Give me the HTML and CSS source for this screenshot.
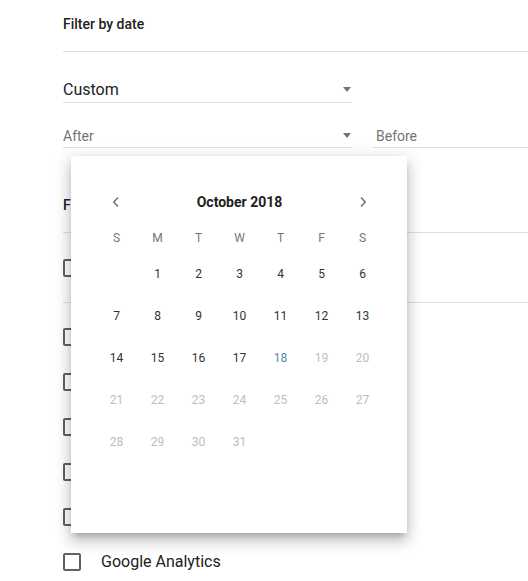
FILE: index.html
```html
<!DOCTYPE html>
<html lang="en">
<head>
    <meta charset="UTF-8">
    <meta name="viewport" content="width=device-width, initial-scale=1.0">
    <title>Filters</title>
    <link rel="stylesheet" href="styles.css">
</head>
<body>

<main class="filters">
    <section class="filter-section">
        <h2 class="filter-title">Filter by date</h2>

        <div class="select-field range-select">
            <span class="select-value">Custom</span>
            <span class="select-arrow"></span>
        </div>

        <div class="date-range">
            <div class="date-field">
                <div class="select-field">
                    <span class="select-placeholder">After</span>
                    <span class="select-arrow"></span>
                </div>

                <!-- date picker popup, opened from the "After" field -->
                <div class="calendar">
                    <div class="calendar-header">
                        <button class="calendar-nav" aria-label="Previous month">
                            <svg width="8" height="12" viewBox="0 0 8 12"><polyline points="6,1.5 1.8,6 6,10.5" fill="none" stroke="#757575" stroke-width="1.6"/></svg>
                        </button>
                        <span class="calendar-month">October 2018</span>
                        <button class="calendar-nav" aria-label="Next month">
                            <svg width="8" height="12" viewBox="0 0 8 12"><polyline points="2,1.5 6.2,6 2,10.5" fill="none" stroke="#757575" stroke-width="1.6"/></svg>
                        </button>
                    </div>
                    <div class="calendar-weekdays">
                        <span>S</span><span>M</span><span>T</span><span>W</span><span>T</span><span>F</span><span>S</span>
                    </div>
                    <div class="calendar-days" id="calendarDays"></div>
                </div>
            </div>

            <div class="select-field before-field">
                <span class="select-placeholder">Before</span>
            </div>
        </div>
    </section>

    <section class="filter-section">
        <h2 class="filter-title">Filter by source</h2>

        <label class="check-row check-all">
            <span class="checkbox"></span>
            <span class="check-label">All sources</span>
        </label>

        <ul class="source-list">
            <li><label class="check-row"><span class="checkbox"></span><span class="check-label">Email</span></label></li>
            <li><label class="check-row"><span class="checkbox"></span><span class="check-label">Chat</span></label></li>
            <li><label class="check-row"><span class="checkbox"></span><span class="check-label">Forms</span></label></li>
            <li><label class="check-row"><span class="checkbox"></span><span class="check-label">Phone</span></label></li>
            <li><label class="check-row"><span class="checkbox"></span><span class="check-label">Social</span></label></li>
            <li><label class="check-row"><span class="checkbox"></span><span class="check-label">Google Analytics</span></label></li>
        </ul>
    </section>
</main>

<script>
    // Build the October 2018 grid: starts on a Monday, today is the 18th
    const daysContainer = document.getElementById('calendarDays');
    const firstWeekday = 1;
    const daysInMonth = 31;
    const today = 18;

    for (let i = 0; i < firstWeekday; i++) {
        daysContainer.appendChild(document.createElement('span'));
    }
    for (let day = 1; day <= daysInMonth; day++) {
        const cell = document.createElement('span');
        cell.className = 'calendar-day';
        if (day === today) cell.classList.add('today');
        if (day > today) cell.classList.add('disabled');
        cell.innerText = day;
        daysContainer.appendChild(cell);
    }
</script>

</body>
</html>
```

FILE: styles.css
```css
body {
    margin: 0;
    background-color: #fff;
    font-family: Roboto, "Liberation Sans", Arial, sans-serif;
    color: #212121;
}
.filters {
    padding-left: 63px;
}
.filter-section + .filter-section {
    margin-top: 33px;
}
.filter-title {
    margin: 0;
    padding: 14px 0 17px;
    font-size: 14px;
    font-weight: 500;
    line-height: 20px;
    color: #212121;
    border-bottom: 1px solid #e0e0e0;
}

/* select-like fields with underline */
.select-field {
    display: flex;
    align-items: center;
    justify-content: space-between;
    padding: 5px 0 1px;
    border-bottom: 1px solid #e0e0e0;
    line-height: 20px;
}
.range-select {
    width: 289px;
    margin-top: 22px;
    padding: 6px 0 2px;
}
.select-value {
    font-size: 16px;
    color: #212121;
}
.select-placeholder {
    font-size: 14px;
    color: #757575;
}
.select-arrow {
    width: 0;
    height: 0;
    margin: 0 1px 1px 0;
    border-left: 4px solid transparent;
    border-right: 4px solid transparent;
    border-top: 5px solid #757575;
}
.date-range {
    display: flex;
    gap: 21px;
    margin-top: 18px;
}
.date-field {
    position: relative;
    width: 289px;
}
.before-field {
    flex: 1;
    padding-left: 3px;
}

/* date picker */
.calendar {
    position: absolute;
    left: 8px;
    top: calc(100% + 8px);
    z-index: 2;
    width: 336px;
    height: 377px;
    box-sizing: border-box;
    padding: 26px 24px 0 25px;
    background-color: #fff;
    box-shadow: 0 5px 6px -3px rgba(0, 0, 0, 0.2), 0 9px 12px 1px rgba(0, 0, 0, 0.14), 0 3px 16px 2px rgba(0, 0, 0, 0.12);
}
.calendar-header {
    display: flex;
    align-items: center;
    justify-content: space-between;
    height: 40px;
    padding: 0 16px;
}
.calendar-nav {
    display: flex;
    padding: 0;
    background: none;
    border: none;
    cursor: pointer;
}
.calendar-month {
    font-size: 14px;
    font-weight: 700;
    color: #212121;
}
.calendar-weekdays, .calendar-days {
    display: grid;
    grid-template-columns: repeat(7, 41px);
    text-align: center;
    font-size: 12px;
}
.calendar-weekdays {
    height: 31px;
    align-items: center;
    color: #757575;
}
.calendar-days {
    grid-auto-rows: 42px;
    align-items: center;
    color: #333;
}
.calendar-day.today {
    color: #4b8ea5;
}
.calendar-day.disabled {
    color: #bdbdbd;
}

/* checkbox rows */
.check-row {
    display: flex;
    align-items: center;
    gap: 20px;
    height: 45px;
    cursor: pointer;
}
.check-all {
    height: 69px;
    border-bottom: 1px solid #e0e0e0;
}
.checkbox {
    width: 14px;
    height: 14px;
    border: 2px solid #616161;
    border-radius: 2px;
}
.check-label {
    font-size: 16px;
    line-height: 20px;
    color: #212121;
}
.source-list {
    list-style: none;
    margin: 0;
    padding: 11px 0 0;
}
```
